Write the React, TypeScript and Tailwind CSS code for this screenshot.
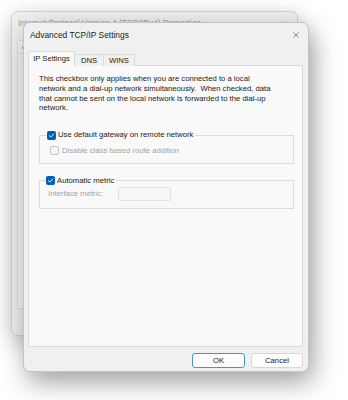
import { X } from "lucide-react";

const font = { fontFamily: '"Liberation Sans", Arial, sans-serif' };

function Check({ disabled = false, checked = false }: { disabled?: boolean; checked?: boolean }) {
  if (checked) {
    return (
      <span className="flex h-[9px] w-[9px] shrink-0 items-center justify-center rounded-[2px] bg-[#005fb8]">
        <svg width="7" height="7" viewBox="0 0 10 10">
          <path d="M2 5.2 L4.1 7.2 L8.2 2.8" fill="none" stroke="white" strokeWidth="1.3" strokeLinecap="round" strokeLinejoin="round" />
        </svg>
      </span>
    );
  }
  return (
    <span
      className={
        disabled
          ? "h-[9px] w-[9px] shrink-0 rounded-[2px] border border-[#c4c4c4] bg-[#f6f6f6]"
          : "h-[9px] w-[9px] shrink-0 rounded-[2px] border border-[#8a8a8a] bg-white"
      }
    />
  );
}

function BackWindow() {
  return (
    <div className="absolute left-[11px] top-[11px] flex h-[325px] w-[287px] flex-col rounded-[7px] border border-[#d0d0d0] bg-[#efefef] shadow-[0_6px_22px_rgba(0,0,0,0.24)]">
      <div className="flex h-[22px] items-center justify-between pl-[6px] pr-[8px] text-[8.4px] text-[#9c9c9c]">
        <span>Internet Protocol Version 4 (TCP/IPv4) Properties</span>
        <X size={9} strokeWidth={1.2} className="text-[#a8a8a8]" />
      </div>
      <div className="flex flex-1 flex-col px-[5px] pb-[26px] pt-[6px]">
        <div className="flex">
          <span className="rounded-t-[2px] border border-b-0 border-[#dedede] bg-[#f7f7f7] px-[4px] pt-[1px] text-[7.6px] text-[#555]">
            General
          </span>
        </div>
        <div className="flex-1 border border-[#dedede] bg-[#f7f7f7]" />
      </div>
    </div>
  );
}

function FrontWindow() {
  return (
    <div className="absolute left-[23px] top-[22px] flex h-[350px] w-[286px] flex-col rounded-[7px] border border-[#c4c4c4] bg-[#f0f0f0] shadow-[4px_10px_26px_rgba(0,0,0,0.38)]">
      {/* title bar */}
      <div className="flex h-[24px] items-center justify-between pl-[6px] pr-[7px]">
        <span className="text-[8.4px] text-[#1a1a1a]">Advanced TCP/IP Settings</span>
        <X size={10} strokeWidth={1.3} className="text-[#333]" />
      </div>

      <div className="flex flex-1 flex-col pl-[4px] pr-[5px] pt-[4px]">
        {/* tabs */}
        <div className="relative z-10 -mb-px flex items-end text-[7.6px] text-[#1a1a1a]">
          <span className="flex h-[15px] w-[47px] items-center justify-center rounded-t-[2px] border border-b-0 border-[#dadada] bg-[#f9f9f9]">
            IP Settings
          </span>
          <span className="flex h-[12px] w-[29px] items-center justify-center border-t border-r border-[#dadada] bg-[#f0f0f0]">
            DNS
          </span>
          <span className="flex h-[12px] w-[31px] items-center justify-center border-t border-r border-[#dadada] bg-[#f0f0f0]">
            WINS
          </span>
        </div>

        {/* panel */}
        <div className="flex h-[282px] flex-col border border-[#dadada] bg-[#f9f9f9] pt-[8px] text-[7.7px] leading-[9.8px] text-[#1a1a1a]">
          <p className="pl-[10px] pr-[10px]">
            This checkbox only applies when you are connected to a local
            <br />
            network and a dial-up network simultaneously.&nbsp; When checked, data
            <br />
            that cannot be sent on the local network is forwarded to the dial-up
            <br />
            network.
          </p>

          <fieldset className="ml-[10px] mr-[8px] mt-[17px] border border-[#dcdcdc] pb-[7px]">
            <legend className="ml-[7px] flex items-center gap-[2px] pr-[2px]">
              <Check checked />
              <span>Use default gateway on remote network</span>
            </legend>
            <div className="flex items-center gap-[3px] pl-[10px] pt-[6px] text-[#a3a3a3]">
              <Check disabled />
              <span>Disable class based route addition</span>
            </div>
          </fieldset>

          <fieldset className="ml-[10px] mr-[8px] mt-[12px] border border-[#dcdcdc] pb-[7px]">
            <legend className="ml-[6px] flex items-center gap-[2px] pr-[2px]">
              <Check checked />
              <span>Automatic metric</span>
            </legend>
            <div className="flex items-center pl-[8px] pt-[1px] text-[#a3a3a3]">
              <span className="w-[70px]">Interface metric:</span>
              <span className="h-[14px] w-[53px] rounded-[2px] border border-[#e2e2e2] bg-[#f7f7f7]" />
            </div>
          </fieldset>
        </div>

        {/* footer */}
        <div className="flex justify-end gap-[6px] pt-[6px] text-[7.7px] text-[#1a1a1a]">
          <button className="flex h-[15px] w-[53px] items-center justify-center rounded-[3px] border border-[#4a90d9] bg-[#fdfdfd]">
            OK
          </button>
          <button className="flex h-[15px] w-[52px] items-center justify-center rounded-[3px] border border-[#d6d6d6] bg-[#fdfdfd]">
            Cancel
          </button>
        </div>
      </div>
    </div>
  );
}

export default function App() {
  return (
    <div className="relative h-[400px] w-[348px] overflow-hidden bg-white" style={font}>
      <BackWindow />
      <FrontWindow />
    </div>
  );
}
